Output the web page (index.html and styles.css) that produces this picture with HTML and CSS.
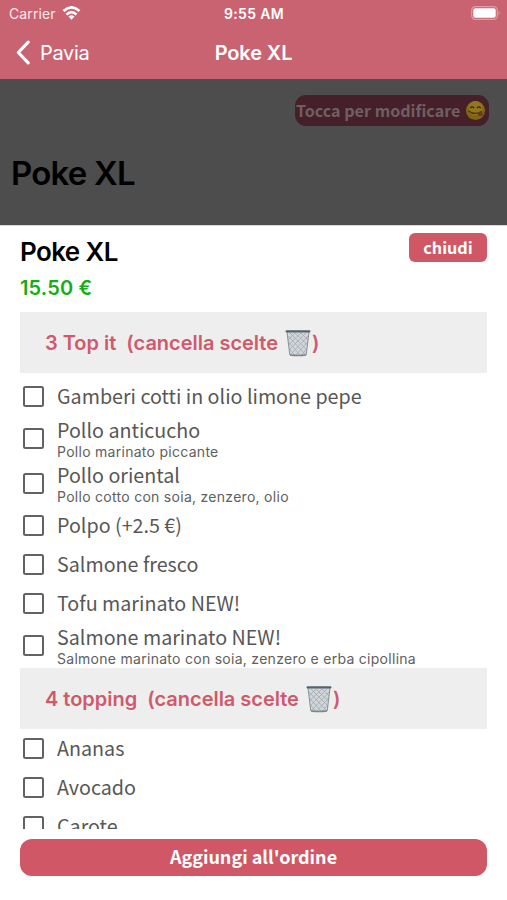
FILE: index.html
```html
<!DOCTYPE html>
<html lang="it">
<head>
<meta charset="utf-8">
<title>Poke XL</title>
<link rel="stylesheet" href="styles.css">
</head>
<body>
<svg class="defs" aria-hidden="true">
  <symbol id="bin" viewBox="0 0 26 28">
    <path d="M2 3 L4.8 26 Q13 28 21.2 26 L24 3 Z" fill="#d0d6da"/>
    <path d="M3 7 L20 25 M5 4 L22 21 M10 4 L22.500 16 M16 4 L23 11 M3.500 13 L15 26 M4.500 20 L9.500 26 M23 7 L6 25 M21 4 L4 21 M16 4 L3.500 16 M10 4 L3 11 M22.500 13 L11 26 M21.500 20 L16.500 26" stroke="#9ba3aa" stroke-width=".7" fill="none"/>
    <path d="M2 3 L4.800 26 M24 3 L21.200 26" stroke="#87919a" stroke-width="1" fill="none"/>
    <path d="M5 26 Q13 27 21 26" stroke="#7b858e" stroke-width="1.400" fill="none"/>
    <rect x="0.500" y="1.200" width="25" height="2.200" rx="1.100" fill="#56616b"/>
  </symbol>
</svg>
<header class="top">
  <div class="status">
    <div class="carrier"><span>Carrier</span>
      <svg class="wifi" viewBox="0 0 18 14"><g fill="none" stroke="#fff" stroke-width="2.700"><path d="M1 5.100 Q9 -2.300 17 5.100"/><path d="M4 8.600 Q9 3.700 14 8.600"/></g><path d="M6 10.600 Q9 8 12 10.600 L9 13.700 Z" fill="#fff"/></svg>
    </div>
    <div class="clock">9:55 AM</div>
    <svg class="battery" viewBox="0 0 30 14"><rect x=".7" y=".7" width="25.600" height="12.600" rx="3.600" fill="none" stroke="#e09ba6" stroke-width="1.200"/><rect x="2.300" y="2.300" width="22.400" height="9.400" rx="2" fill="#fff"/><path d="M27.700 4.800 Q29.700 7 27.700 9.200 Z" fill="#e09ba6"/></svg>
  </div>
  <nav class="nav">
    <div class="back"><svg class="chevron" viewBox="0 0 15 24"><path d="M12.500 2 L3 12 L12.500 22" fill="none" stroke="#fff" stroke-width="3" stroke-linecap="round" stroke-linejoin="round"/></svg><span>Pavia</span></div>
    <h1 class="nav-title">Poke XL</h1>
    <span></span>
  </nav>
</header>
<section class="behind">
  <div class="edit"><span>Tocca per modificare</span>
    <svg class="face" viewBox="0 0 22 22"><circle cx="11" cy="11" r="10" fill="#806514"/><circle cx="11" cy="8.500" r="7.500" fill="#94771c"/><path d="M5.500 8.500 Q7.500 6 9.500 8.500 M12.500 8.500 Q14.500 6 16.500 8.500" stroke="#352713" stroke-width="1.300" fill="none"/><path d="M4 11.500 Q10 16.500 17 12" stroke="#493015" stroke-width="1.300" stroke-linecap="round" fill="none"/><path d="M13 14.500 Q14.500 12 18 12.500 Q20 16 16.500 17 Q13.500 17.200 13 14.500Z" fill="#6b3a26"/></svg>
  </div>
  <h2 class="behind-title">Poke XL</h2>
</section>
<main class="sheet">
  <div class="sheet-head">
    <div>
      <h2 class="title">Poke XL</h2>
      <p class="price">15.50 €</p>
    </div>
    <button class="close">chiudi</button>
  </div>
  <div class="list">
    <h3 class="group first"><span>3 Top it&nbsp; (cancella scelte</span><svg class="bin"><use href="#bin"/></svg><span>)</span></h3>
    <label class="row"><i class="box"></i><span class="name">Gamberi cotti in olio limone pepe</span></label>
    <label class="row tall"><i class="box"></i><span class="texts"><span class="name">Pollo anticucho</span><small>Pollo marinato piccante</small></span></label>
    <label class="row tall"><i class="box"></i><span class="texts"><span class="name">Pollo oriental</span><small>Pollo cotto con soia, zenzero, olio</small></span></label>
    <label class="row"><i class="box"></i><span class="name">Polpo (+2.5 €)</span></label>
    <label class="row"><i class="box"></i><span class="name">Salmone fresco</span></label>
    <label class="row"><i class="box"></i><span class="name">Tofu marinato NEW!</span></label>
    <label class="row tall"><i class="box"></i><span class="texts"><span class="name">Salmone marinato NEW!</span><small>Salmone marinato con soia, zenzero e erba cipollina</small></span></label>
    <h3 class="group"><span>4 topping&nbsp; (cancella scelte</span><svg class="bin"><use href="#bin"/></svg><span>)</span></h3>
    <label class="row"><i class="box"></i><span class="name">Ananas</span></label>
    <label class="row"><i class="box"></i><span class="name">Avocado</span></label>
    <label class="row"><i class="box"></i><span class="name">Carote</span></label>
  </div>
  <button class="add">Aggiungi all'ordine</button>
</main>
</body>
</html>
```

FILE: styles.css
```css
* { box-sizing: border-box; margin: 0; padding: 0; }
body { width: 507px; height: 900px; overflow: hidden; background: #fff; font-family: Inter, sans-serif; display: flex; flex-direction: column; }
.defs { display: none; }
.top { height: 79px; flex: none; background: #c96371; color: #fff; }
.status { height: 27px; display: grid; grid-template-columns: 1fr auto 1fr; align-items: center; padding: 0 6px 0 9px; font-size: 14px; }
.carrier { display: flex; align-items: center; gap: 6px; color: #fbe9eb; letter-spacing: .1px; }
.wifi { width: 19px; height: 14px; margin-top: -1px; }
.clock { font-weight: 600; letter-spacing: .35px; margin-right: 2px; }
.battery { width: 30px; height: 14px; justify-self: end; margin-top: -1px; }
.nav { height: 51px; display: grid; grid-template-columns: 1fr auto 1fr; align-items: center; padding: 0 15px; }
.back { display: flex; align-items: center; gap: 9px; font-size: 20px; letter-spacing: -.3px; }
.chevron { width: 16px; height: 25px; margin-top: -1px; }
.nav-title { font-size: 20px; font-weight: 600; letter-spacing: -.1px; }
.behind { height: 146px; flex: none; background: #4d4d4d; padding: 16px 18px 0 11px; display: flex; flex-direction: column; }
.edit { align-self: flex-end; width: 194px; height: 31px; border-radius: 11px; background: #45202a; color: #6f5f62; display: flex; align-items: center; justify-content: space-between; padding: 0 3px 0 1px; font: 700 16.100px/28px "Noto Sans CJK SC", sans-serif; white-space: nowrap; }
.edit span { margin-bottom: 2px; }
.face { width: 21px; height: 21px; flex: none; }
.behind-title { margin-top: 27px; font-size: 33px; line-height: 40px; font-weight: 600; letter-spacing: -.8px; color: #000; }
.sheet { flex: 1; padding: 8px 20px 24px; border-top: 1px solid #d8d8d8; display: flex; flex-direction: column; min-height: 0; }
.sheet-head { height: 78px; flex: none; display: flex; justify-content: space-between; align-items: flex-start; }
.title { font-size: 26px; line-height: 36px; font-weight: 600; letter-spacing: -.6px; color: #000; }
.price { font-size: 20px; line-height: 36px; font-weight: 600; letter-spacing: .15px; color: #14ae14; }
.close, .add { border: 0; background: #cf5766; color: #fff; font-family: "Noto Sans CJK SC", sans-serif; font-weight: 700; }
.close { width: 78px; height: 29px; margin-top: -1px; border-radius: 6px; font-size: 16.200px; line-height: 27px; padding-bottom: 1px; }
.list { height: 517px; flex: none; overflow: hidden; }
.group { height: 61px; background: #eee; color: #cf5a6c; display: flex; align-items: center; padding: 1px 0 0 25px; font-size: 20px; font-weight: 600; letter-spacing: -.02px; }
.group.first { margin-bottom: 4px; }
.bin { width: 26px; height: 28px; margin: 0 1px 0 7px; }
.row { height: 39px; display: flex; align-items: center; padding-left: 3px; gap: 13px; color: #575757; }
.row.tall { height: 45px; }
.box { width: 21px; height: 21px; flex: none; border: 2px solid #626262; border-radius: 2.500px; }
.name { font: 400 19.700px/28px "Noto Sans CJK SC", sans-serif; white-space: nowrap; margin-top: -1px; }
.texts { display: flex; flex-direction: column; }
.texts .name { line-height: 27px; }
small { font-size: 14px; line-height: 18px; letter-spacing: .28px; white-space: nowrap; color: #606060; }
.add { margin-top: 10px; height: 37px; flex: none; border-radius: 12px; font-size: 18px; line-height: 33px; padding-bottom: 2px; }
```
